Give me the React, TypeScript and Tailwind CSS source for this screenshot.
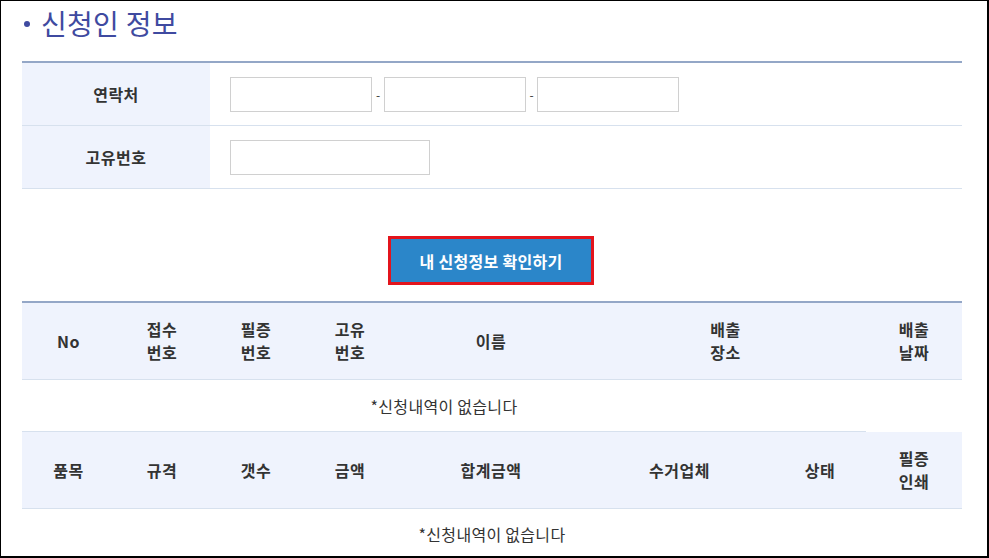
const headA = [
  { w: "w-[93px]", lines: ["No"] },
  { w: "w-[94px]", lines: ["접수", "번호"] },
  { w: "w-[94px]", lines: ["필증", "번호"] },
  { w: "w-[94px]", lines: ["고유", "번호"] },
  { w: "w-[188px]", lines: ["이름"] },
  { w: "w-[281px]", lines: ["배출", "장소"] },
  { w: "w-[96px]", lines: ["배출", "날짜"] },
];

const headB = [
  { w: "w-[93px]", lines: ["품목"] },
  { w: "w-[94px]", lines: ["규격"] },
  { w: "w-[94px]", lines: ["갯수"] },
  { w: "w-[94px]", lines: ["금액"] },
  { w: "w-[188px]", lines: ["합계금액"] },
  { w: "w-[189px]", lines: ["수거업체"] },
  { w: "w-[92px]", lines: ["상태"] },
  { w: "w-[96px]", lines: ["필증", "인쇄"] },
];

type Col = { w: string; lines: string[] };

function HeadRow({ cols, top }: { cols: Col[]; top?: boolean }) {
  return (
    <div
      className={
        "flex h-[77px] bg-[#eff3fd] border-b border-[#d7e1ee] " +
        (top ? "border-t-2 border-t-[#94a7c7] h-[79px]" : "")
      }
    >
      {cols.map((c, i) => (
        <div
          key={i}
          className={`${c.w} shrink-0 flex flex-col items-center justify-center text-[16px] tracking-[0.5px] font-bold leading-[23px] text-[#333]`}
        >
          {c.lines.map((l) => (
            <span key={l}>{l}</span>
          ))}
        </div>
      ))}
    </div>
  );
}

function Field({ w }: { w: string }) {
  return <div className={`${w} h-[35px] border border-[#d0d0d0] bg-white`} />;
}

export default function App() {
  return (
    <div className="w-[989px] h-[558px] overflow-hidden bg-white border-l border-t border-r-2 border-b-2 border-black font-['Noto_Sans_CJK_KR','Noto_Sans',sans-serif]">
      <div className="pl-[21px] w-[961px]">
        <div className="h-[60px] flex items-start pt-[1px]">
          <div className="flex items-center h-[42px]">
            <span className="ml-[2px] w-[6px] h-[6px] rounded-full bg-[#3f4aa0] mt-[2px]" />
            <h1 className="ml-[11px] text-[28px] tracking-[0.3px] leading-[42px] text-[#3f4aa0]">신청인 정보</h1>
          </div>
        </div>

        <div className="border-t-2 border-[#94a7c7]">
          <div className="flex h-[63px] border-b border-[#d7e1ee]">
            <div className="w-[188px] bg-[#eff3fd] flex items-center justify-center text-[16px] tracking-[0.5px] font-bold text-[#333]">
              연락처
            </div>
            <div className="flex items-center pl-[20px]">
              <Field w="w-[142px]" />
              <span className="w-[12px] text-center text-[12px] text-[#333] mt-[2px]">-</span>
              <Field w="w-[142px]" />
              <span className="w-[11px] text-center text-[12px] text-[#333] mt-[2px]">-</span>
              <Field w="w-[142px]" />
            </div>
          </div>
          <div className="flex h-[63px] border-b border-[#d7e1ee]">
            <div className="w-[188px] bg-[#eff3fd] flex items-center justify-center text-[16px] tracking-[0.5px] font-bold text-[#333]">
              고유번호
            </div>
            <div className="flex items-center pl-[20px]">
              <Field w="w-[200px]" />
            </div>
          </div>
        </div>

        <div className="flex justify-center pt-[47px] pb-[16px]">
          <button className="w-[206px] h-[49px] border-[3px] border-[#e3141c] bg-[#2b86c9] text-white text-[16px] tracking-[0.3px] font-bold ml-[-2px]">
            내 신청정보 확인하기
          </button>
        </div>

        <HeadRow cols={headA} top />
        <div className="w-[844px] h-[52px] border-b border-[#d7e1ee] flex items-center justify-center text-[16px] tracking-[0.3px] text-[#333]">
          *신청내역이 없습니다
        </div>
        <HeadRow cols={headB} />
        <div className="h-[50px] flex items-center justify-center text-[16px] tracking-[0.3px] text-[#333]">
          *신청내역이 없습니다
        </div>
      </div>
    </div>
  );
}
